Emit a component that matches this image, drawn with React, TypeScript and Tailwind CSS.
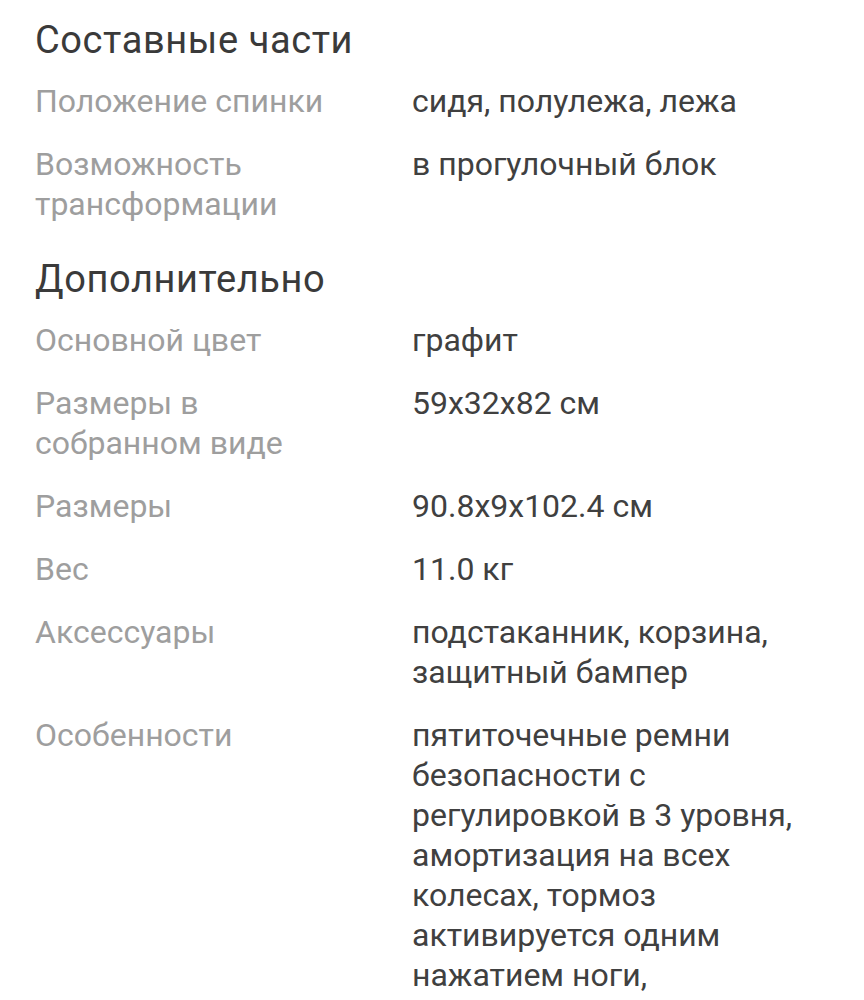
import React from "react";

type Row = { label: string; value: string };

const sections: { title: string; rows: Row[] }[] = [
  {
    title: "Составные части",
    rows: [
      { label: "Положение спинки", value: "сидя, полулежа, лежа" },
      { label: "Возможность трансформации", value: "в прогулочный блок" },
    ],
  },
  {
    title: "Дополнительно",
    rows: [
      { label: "Основной цвет", value: "графит" },
      { label: "Размеры в собранном виде", value: "59x32x82 см" },
      { label: "Размеры", value: "90.8x9x102.4 см" },
      { label: "Вес", value: "11.0 кг" },
      { label: "Аксессуары", value: "подстаканник, корзина, защитный бампер" },
      {
        label: "Особенности",
        value:
          "пятиточечные ремни безопасности с регулировкой в 3 уровня, амортизация на всех колесах, тормоз активируется одним нажатием ноги, складывается одной рукой",
      },
    ],
  },
];

export default function App() {
  return (
    <div
      className="w-[864px] h-[1000px] overflow-hidden bg-white px-[35px]"
      style={{ fontFamily: "Roboto, 'Noto Sans', sans-serif" }}
    >
      {sections.map((s, i) => (
        <section key={s.title} className={i === 0 ? "pt-[17px]" : "pt-[20px]"}>
          <h2 className="text-[38px] leading-[46px] tracking-[0.6px] font-normal text-[#3a3a3a] mb-[7px]">
            {s.title}
          </h2>
          {s.rows.map((r) => (
            <div key={r.label} className="flex pt-[11px] pb-[12px] text-[32px] leading-[40px]">
              <div className="w-[377px] shrink-0 pr-[60px] text-[#9e9e9e]">{r.label}</div>
              <div className="w-[390px] text-[#404040]">{r.value}</div>
            </div>
          ))}
        </section>
      ))}
    </div>
  );
}
